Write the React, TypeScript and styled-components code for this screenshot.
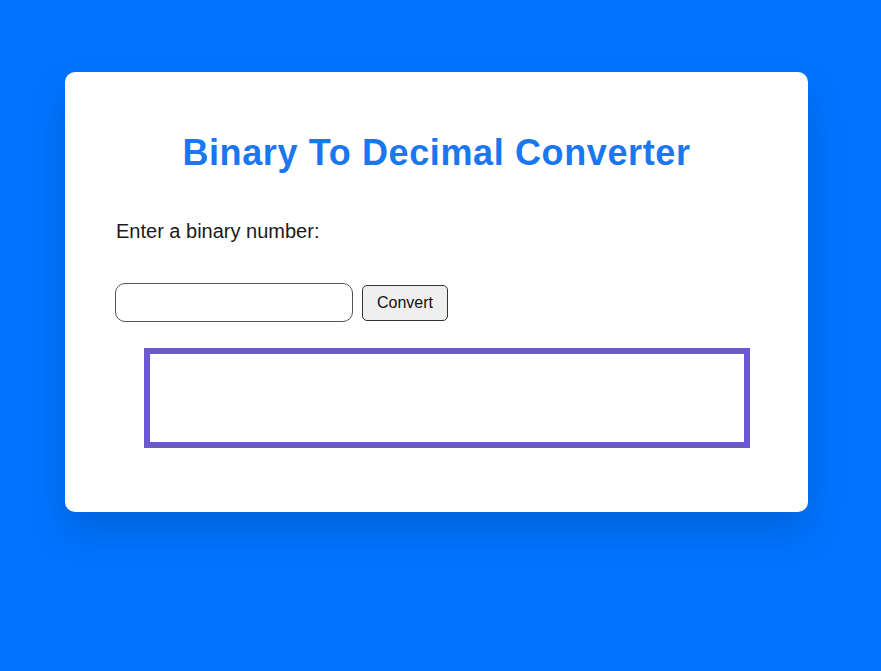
import React from "react";
import styled, { createGlobalStyle } from "styled-components";

const Global = createGlobalStyle`
  html, body { margin: 0; padding: 0; background: #0074ff; }
  body { font-family: "Liberation Sans", Arial, sans-serif; min-height: 671px; }
`;

const Page = styled.div`
  padding: 72px 0 0 65px;
`;

const Card = styled.div`
  width: 743px;
  height: 440px;
  box-sizing: border-box;
  background: #ffffff;
  border-radius: 10px;
  box-shadow: 0 20px 40px rgba(0, 0, 0, 0.15);
  padding: 59px 50px 0 50px;
`;

const Title = styled.h1`
  margin: 0;
  text-align: center;
  color: #1a77f0;
  font-size: 36px;
  font-weight: bold;
  line-height: 44px;
  letter-spacing: 0.62px;
`;

const Label = styled.p`
  margin: 44px 0 0 1px;
  font-size: 20px;
  line-height: 24px;
  color: #1a1a1a;
`;

const Row = styled.div`
  display: flex;
  align-items: center;
  gap: 9px;
  margin-top: 40px;
`;

const Input = styled.input`
  width: 238px;
  height: 39px;
  box-sizing: border-box;
  border: 1px solid #555;
  border-radius: 10px;
  padding: 0 8px;
  font-size: 16px;
  background: #fff;
`;

const Button = styled.button`
  height: 36px;
  width: 86px;
  box-sizing: border-box;
  border: 1px solid #333;
  border-radius: 5px;
  background: #efefef;
  font-family: "Liberation Sans", Arial, sans-serif;
  font-size: 16px;
  color: #111;
`;

const Result = styled.div`
  margin: 26px 0 0 29px;
  width: 606px;
  height: 100px;
  box-sizing: border-box;
  border: 6px solid #6a5acd;
`;

export default function App() {
  return (
    <>
      <Global />
      <Page>
        <Card>
          <Title>Binary To Decimal Converter</Title>
          <Label>Enter a binary number:</Label>
          <Row>
            <Input type="text" />
            <Button>Convert</Button>
          </Row>
          <Result />
        </Card>
      </Page>
    </>
  );
}
